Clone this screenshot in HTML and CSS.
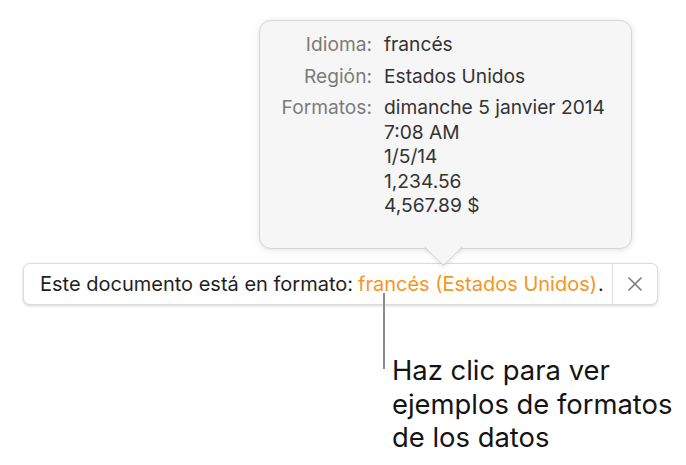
FILE: index.html
```html
<!DOCTYPE html>
<html lang="es">
<head>
<meta charset="utf-8">
<link rel="stylesheet" href="styles.css">
</head>
<body>
<div class="stage">
  <div class="popover">
    <div class="grid">
      <div class="label">Idioma:</div>
      <div class="value">francés</div>
      <div class="label">Región:</div>
      <div class="value">Estados Unidos</div>
      <div class="label">Formatos:</div>
      <div class="value formats">dimanche 5 janvier 2014<br>7:08 AM<br>1/5/14<br>1,234.56<br>4,567.89 $</div>
    </div>
  </div>
  <div class="bar">
    <div class="message">Este documento está en formato: <span class="link">francés (Estados Unidos)</span>.</div>
    <div class="close">
      <svg width="16" height="16" viewBox="0 0 16 16"><path d="M1.5 1.5 L14.5 14.5 M14.5 1.5 L1.5 14.5" stroke="#7d7d7d" stroke-width="1.6" fill="none"/></svg>
    </div>
  </div>
  <div class="callout">
    <div class="leader"></div>
    <div class="callout-text">Haz clic para ver<br>ejemplos de formatos<br>de los datos</div>
  </div>
</div>
</body>
</html>
```
FILE: styles.css
```css
html, body {
  margin: 0;
  padding: 0;
  background: #ffffff;
}
body {
  width: 686px;
  height: 465px;
  overflow: hidden;
  font-family: "Inter", "Liberation Sans", sans-serif;
}
.stage {
  padding-top: 20px;
}
.popover {
  position: relative;
  z-index: 4;
  box-sizing: border-box;
  margin-left: 259px;
  width: 373px;
  height: 229px;
  background: #f6f6f6;
  border: 1px solid #d6d6d6;
  border-radius: 12px;
  box-shadow: 0 1px 6px rgba(0,0,0,0.12);
  padding-top: 11px;
}
.popover::after {
  content: "";
  position: absolute;
  left: 170px;
  bottom: -13px;
  width: 26px;
  height: 26px;
  background: #f6f6f6;
  border-right: 1px solid #d0d0d0;
  border-bottom: 1px solid #d0d0d0;
  transform: rotate(45deg);
  border-bottom-right-radius: 4px;
  box-shadow: 2px 2px 3px rgba(0,0,0,0.06);
}
.grid {
  position: relative;
  z-index: 1;
  display: grid;
  grid-template-columns: 112px auto;
  column-gap: 12px;
  row-gap: 7px;
  font-size: 19.2px;
  line-height: 24.5px;
}
.label {
  text-align: right;
  color: #7b7b7b;
}
.value {
  color: #333333;
}
.bar {
  position: relative;
  z-index: 2;
  display: flex;
  box-sizing: border-box;
  margin-top: 14px;
  margin-left: 23px;
  width: 635px;
  height: 42px;
  background: #ffffff;
  border: 1px solid #dcdcdc;
  border-radius: 7px;
  box-shadow: 0 1px 3px rgba(0,0,0,0.18);
}
.message {
  flex: 1;
  display: flex;
  align-items: center;
  padding-left: 16px;
  font-size: 20px;
  color: #1f1f1f;
  white-space: nowrap;
}
.link {
  color: #f5961e;
  margin: 0 1px 0 5px;
}
.close {
  width: 44px;
  display: flex;
  align-items: center;
  justify-content: center;
  border-left: 1px solid #e2e2e2;
}
.callout {
  display: flex;
  margin-left: 383px;
  margin-top: -12px;
}
.leader {
  position: relative;
  z-index: 3;
  width: 2px;
  height: 76px;
  background: #8a8a8a;
}
.callout-text {
  margin-left: 7px;
  margin-top: 61px;
  font-size: 27.4px;
  line-height: 33.5px;
  color: #141414;
}
```
